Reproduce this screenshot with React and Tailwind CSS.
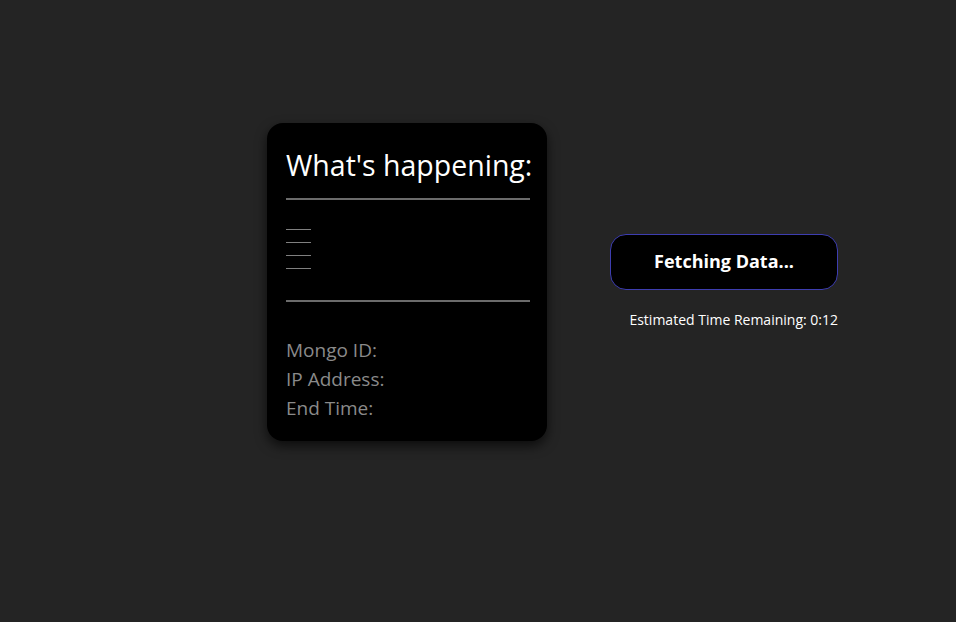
import React from 'react';

const FONT = { fontFamily: '"Open Sans", "Noto Sans", sans-serif' };

export default function App() {
  return (
    <div className="min-h-screen w-full bg-[#242424] text-white" style={FONT}>
      <div className="flex items-center pl-[267px] pt-[123px]">
        <div className="w-[280px] h-[318px] bg-black rounded-[16px] shadow-[0_5px_12px_rgba(0,0,0,0.65)] px-[19px] pt-[22px]">
          <h1 className="text-[28.5px] leading-[40px] font-normal text-white whitespace-nowrap">What's happening:</h1>
          <hr className="mt-[13px] border-0 h-[2px] bg-[#6b6b6b] w-[244px]" />
          <div className="flex flex-col gap-[12px] mt-[29px]">
            <div className="w-[25px] h-[1px] bg-[#808080]" />
            <div className="w-[25px] h-[1px] bg-[#808080]" />
            <div className="w-[25px] h-[1px] bg-[#808080]" />
            <div className="w-[25px] h-[1px] bg-[#808080]" />
          </div>
          <hr className="mt-[31px] border-0 h-[2px] bg-[#6b6b6b] w-[244px]" />
          <div className="mt-[34px] flex flex-col text-[19px] leading-[29px] text-[#8a8a8a]">
            <span>Mongo ID:</span>
            <span>IP Address:</span>
            <span>End Time:</span>
          </div>
        </div>
        <div className="ml-[63px] flex flex-col items-end w-[228px] mt-[-2px]">
          <button className="w-[228px] h-[56px] bg-black border border-[#3d3db0] rounded-[16px] text-[18px] font-bold text-white">
            Fetching Data...
          </button>
          <p className="mt-[21px] text-[14px] leading-[18px] text-white whitespace-nowrap">Estimated Time Remaining: 0:12</p>
        </div>
      </div>
    </div>
  );
}
